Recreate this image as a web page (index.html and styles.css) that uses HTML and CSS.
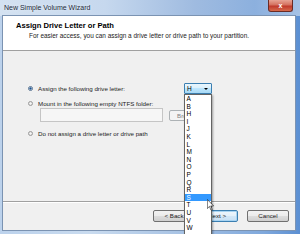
FILE: index.html
```html
<!DOCTYPE html>
<html>
<head>
<meta charset="utf-8">
<link rel="stylesheet" href="styles.css">
</head>
<body>
<div class="window">
  <div class="titlebar">
    <span class="title">New Simple Volume Wizard</span>
    <span class="close">x</span>
  </div>
  <div class="client">
    <div class="header">
      <div class="h-title">Assign Drive Letter or Path</div>
      <div class="h-sub">For easier access, you can assign a drive letter or drive path to your partition.</div>
    </div>
    <div class="content">
      <div class="row row1">
        <span class="radio checked"></span>
        <span class="label label1">Assign the following drive letter:</span>
        <div class="combo"><span class="combo-val">H</span><span class="arrow"></span></div>
      </div>
      <div class="row row2">
        <span class="radio"></span>
        <span class="label">Mount in the following empty NTFS folder:</span>
      </div>
      <div class="row row3">
        <div class="textbox"></div>
        <div class="btn disabled browse">Browse...</div>
      </div>
      <div class="row row4">
        <span class="radio"></span>
        <span class="label">Do not assign a drive letter or drive path</span>
      </div>
    </div>
    <div class="footer">
      <div class="btn back">&lt; Back</div>
      <div class="btn default next">Next &gt;</div>
      <div class="btn cancel">Cancel</div>
    </div>
  </div>
  <ul class="droplist">
    <li>A</li><li>B</li><li>H</li><li>I</li><li>J</li><li>K</li><li>L</li><li>M</li><li>N</li><li>O</li><li>P</li><li>Q</li><li>R</li><li class="sel">S</li><li>T</li><li>U</li><li>V</li><li>W</li>
  </ul>
  <svg class="cursor" viewBox="0 0 12 20" width="7" height="12">
    <path d="M0.5 0.5 L0.5 16 L4.2 12.4 L6.8 18.8 L9 17.9 L6.4 11.6 L11.3 11.6 Z" fill="#fff" stroke="#000" stroke-width="1"/>
  </svg>
</div>
</body>
</html>
```
FILE: styles.css
```css
* { box-sizing: border-box; }
html, body {
  margin: 0;
  padding: 0;
  width: 300px;
  height: 234px;
  overflow: hidden;
  background: #6f9bd2;
}
.window {
  position: relative;
  width: 300px;
  height: 234px;
  display: flex;
  flex-direction: column;
  background: linear-gradient(to right, #bcd2ec 0%, #c9dbef 30%, #a8c3e4 60%, #7fa8dc 88%, #5b8fd2 100%);
  font-family: "Liberation Sans", Arial, sans-serif;
  color: #1a1a1a;
  overflow: hidden;
}
.titlebar {
  height: 16px;
  flex: 0 0 16px;
  display: flex;
  align-items: flex-start;
  background: linear-gradient(to right, #d4e2f1 0%, #c6d8ee 35%, #9fbbe0 65%, #8cb0de 85%, #a6c2e5 100%);
}
.title {
  font-size: 7px;
  line-height: 16px;
  padding-left: 4px;
  color: #1e2a3a;
  text-shadow: 0 0 3px #eef4fb;
}
.close {
  margin-left: auto;
  margin-right: 7px;
  width: 25px;
  height: 12px;
  border: 1px solid #6b2b24;
  border-top: none;
  border-radius: 0 0 3px 3px;
  background: linear-gradient(#e7a394 0%, #d4705e 45%, #c0392b 55%, #d66a4c 100%);
  color: #fff;
  font-size: 7px;
  font-weight: bold;
  line-height: 11px;
  text-align: center;
}
.client {
  flex: 0 0 214px;
  margin: 0 5px 0 3px;
  display: flex;
  flex-direction: column;
  background: #f0f0f0;
  box-shadow: 0 0 0 1px #7b93b2;
}
.header {
  flex: 0 0 35px;
  background: #fff;
  border-bottom: 1px solid #a0a0a0;
  padding: 6px 0 0 13px;
}
.h-title {
  font-size: 7.6px;
  font-weight: bold;
  line-height: 8px;
  color: #000;
}
.h-sub {
  font-size: 6.45px;
  line-height: 7px;
  margin-top: 2px;
  padding-left: 13px;
  color: #222;
  white-space: nowrap;
}
.content {
  flex: 0 0 150px;
  padding: 32px 0 0 25px;
  font-size: 6.2px;
  color: #222;
}
.row {
  display: flex;
  align-items: center;
}
.row1 { height: 11px; }
.row2 { height: 9px; margin-top: 5px; }
.row3 { height: 14px; padding-left: 12px; }
.row4 { height: 9px; margin-top: 7px; }
.radio {
  flex: 0 0 5px;
  width: 5px;
  height: 5px;
  border-radius: 50%;
  border: 1px solid #9a9a9a;
  background: radial-gradient(circle, #f6f6f6 0%, #dedede 100%);
  margin-right: 5px;
}
.radio.checked {
  border-color: #5a7592;
  background: radial-gradient(circle, #1b4f8a 0 35%, #6f95bf 50%, #dfe8f1 65%);
}
.label { white-space: nowrap; }
.label1 { flex: 0 0 146px; }
.combo {
  width: 28px;
  height: 11px;
  border: 1px solid #3c7fb1;
  border-radius: 1px;
  background: linear-gradient(#eaf6fd 0%, #d9f0fc 50%, #bee6fd 50%, #a7d9f5 100%);
  display: flex;
  align-items: center;
  padding: 0 3px 0 2px;
  font-size: 6.5px;
  color: #000;
}
.arrow {
  margin-left: auto;
  width: 0;
  height: 0;
  border-left: 2px solid transparent;
  border-right: 2px solid transparent;
  border-top: 2.5px solid #000;
}
.textbox {
  width: 123px;
  height: 14px;
  border: 1px solid #c5c5c5;
  background: #f6f6f6;
}
.btn {
  width: 42px;
  height: 12px;
  border: 1px solid #707070;
  border-radius: 2px;
  background: linear-gradient(#f2f2f2 0%, #ebebeb 50%, #dddddd 50%, #cfcfcf 100%);
  font-size: 6.2px;
  line-height: 10px;
  text-align: center;
  color: #1a1a1a;
}
.browse {
  margin-left: 6px;
  height: 11px;
  line-height: 9px;
}
.btn.disabled {
  border-color: #adb2b5;
  background: #f4f4f4;
  color: #838383;
}
.footer {
  flex: 0 0 29px;
  border-top: 1px solid #a0a0a0;
  box-shadow: inset 0 1px #fff;
  display: flex;
  justify-content: flex-end;
  align-items: flex-start;
  padding: 8px 6px 0 0;
}
.next {
  margin-left: 1px;
}
.btn.default {
  border-color: #3c7fb1;
  background: linear-gradient(#eef6fc 0%, #e3f0fa 50%, #d3e7f7 50%, #c6e0f5 100%);
  box-shadow: inset 0 0 0 1px #a8d4f2;
}
.cancel {
  margin-left: 9px;
}
.droplist {
  position: absolute;
  left: 184px;
  top: 94px;
  width: 28px;
  margin: 0;
  padding: 0 0 10px 0;
  list-style: none;
  background: #fff;
  border: 1px solid #646464;
  box-shadow: 1px 1px 2px rgba(0,0,0,0.35);
  font-size: 6.5px;
  color: #000;
}
.droplist li {
  height: 7.6px;
  line-height: 7.6px;
  padding-left: 1.5px;
}
.droplist li.sel {
  background: #3399ff;
  color: #fff;
}
.cursor {
  position: absolute;
  left: 207px;
  top: 199px;
}
```
